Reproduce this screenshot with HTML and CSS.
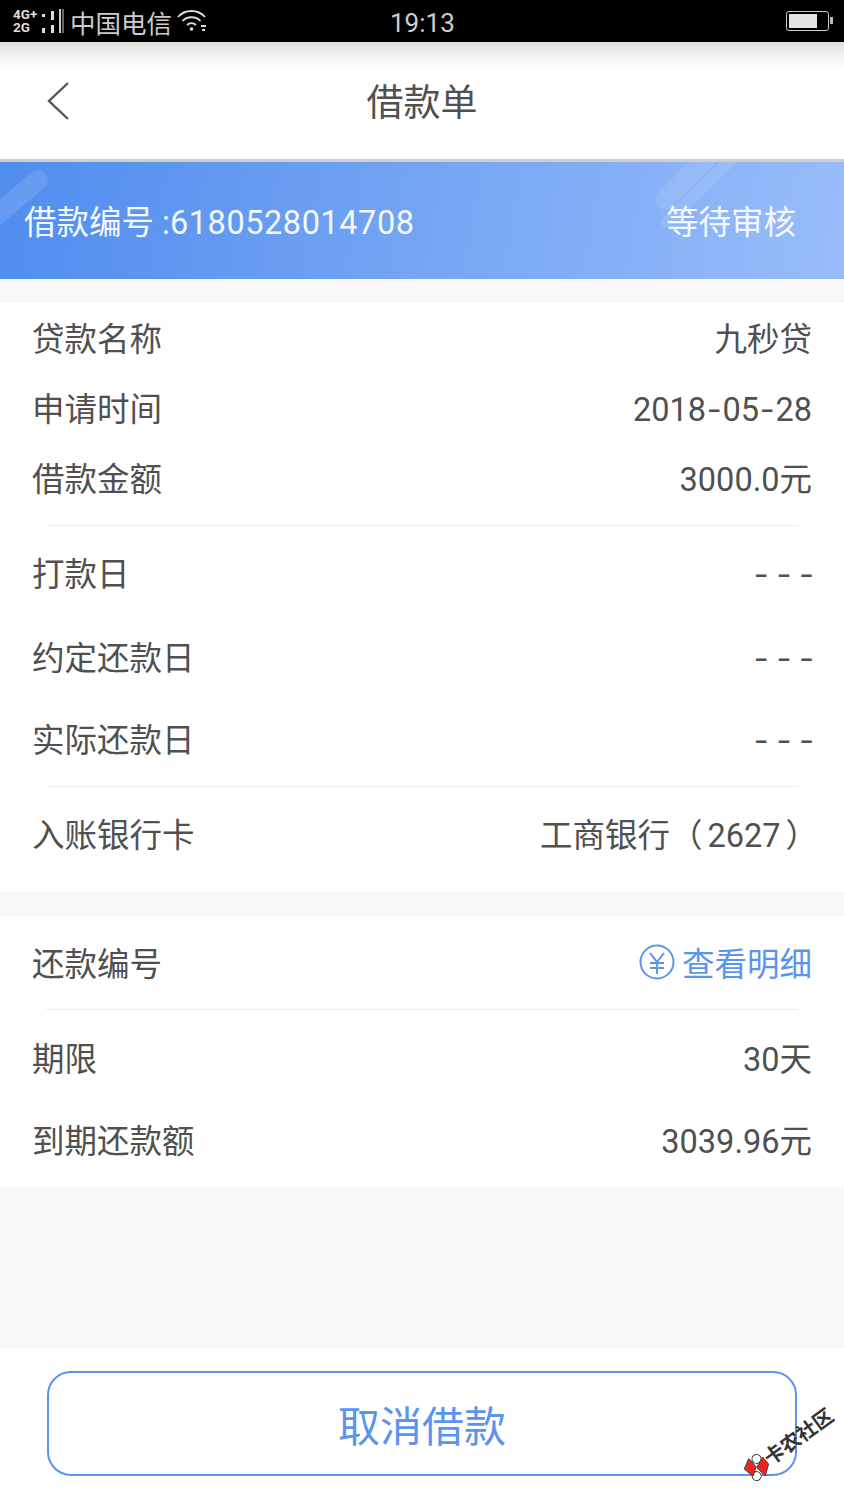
FILE: index.html
```html
<!DOCTYPE html>
<html lang="zh-CN">
<head>
    <meta charset="UTF-8">
    <meta name="viewport" content="width=device-width, initial-scale=1.0">
    <title>借款单</title>
    <link rel="stylesheet" href="styles.css">
</head>
<body>
    <div class="status">
        <div class="status-left">
            <div class="net"><span>4G+</span><span>2G</span></div>
            <svg class="signal" width="26" height="26" viewBox="0 0 26 26">
                <rect x="3" y="6" width="3" height="3" fill="#ddd"/>
                <rect x="3" y="20" width="3" height="5" fill="#ddd"/>
                <rect x="12" y="3" width="3" height="9" fill="#ddd"/>
                <rect x="12" y="17" width="3" height="8" fill="#ddd"/>
                <rect x="20" y="1" width="2" height="24" fill="#ccc"/>
                <rect x="23" y="1" width="2" height="24" fill="#666"/>
            </svg>
            <span class="carrier">中国电信</span>
            <svg class="wifi" width="30" height="26" viewBox="0 0 30 26" fill="none" stroke="#ddd" stroke-width="1.8">
                <path d="M1 9 C8 1 21 1 28 9"/>
                <path d="M5.500 13 C10 8 19 8 23.500 13"/>
                <path d="M10 17 C12.500 14.500 16.500 14.500 19 17"/>
                <circle cx="14.500" cy="21" r="1.800" fill="#ddd" stroke="none"/>
                <path d="M24 18 H29 M25 22 H28"/>
            </svg>
        </div>
        <span class="clock">19:13</span>
        <div class="battery"><div class="battery-fill"></div></div>
    </div>

    <div class="nav">
        <svg class="back" width="24" height="40" viewBox="0 0 24 40" fill="none" stroke="#555" stroke-width="2.400">
            <path d="M22 2 L3 20 L22 38"/>
        </svg>
        <span class="nav-title">借款单</span>
    </div>

    <div class="banner">
        <svg class="banner-art" width="844" height="117" viewBox="0 0 844 117" fill="none" stroke-linecap="round">
            <path d="M-14 62 L38 18" stroke="#fff" stroke-opacity="0.12" stroke-width="20"/>
            <path d="M667 60 L735 -6" stroke="#fff" stroke-opacity="0.1" stroke-width="12"/>
            <path d="M665 38 L705 -2" stroke="#fff" stroke-opacity="0.1" stroke-width="20"/>
        </svg>
        <span class="banner-no">借款编号 :<span class="banner-digits">6180528014708</span></span>
        <span class="banner-state">等待审核</span>
    </div>

    <div class="card card-loan">
        <div class="row row-tight"><span>贷款名称</span><span>九秒贷</span></div>
        <div class="row row-tight"><span>申请时间</span><span>2018<span class="hy">-</span>05<span class="hy">-</span>28</span></div>
        <div class="row row-tight"><span>借款金额</span><span>3000.0元</span></div>
        <div class="divider divider-after-tight"></div>
        <div class="row row-wide row-first"><span>打款日</span><span class="dash">- - -</span></div>
        <div class="row row-wide row-second"><span>约定还款日</span><span class="dash">- - -</span></div>
        <div class="row row-wide"><span>实际还款日</span><span class="dash">- - -</span></div>
        <div class="divider divider-after-wide"></div>
        <div class="row row-bank"><span>入账银行卡</span><span class="bank">工商银行（<span class="bank-no">2627</span>）</span></div>
    </div>

    <div class="card card-repay">
        <div class="row row-repay">
            <span>还款编号</span>
            <span class="detail">
                <svg class="detail-icon" width="36" height="36" viewBox="0 0 36 36" fill="none" stroke="#5b94ee" stroke-width="2">
                    <circle cx="18" cy="18" r="16.500"/>
                    <path d="M11 9 L18 18 L25 9 M11 19 H25 M11 24 H25 M18 18 V30"/>
                </svg>
                <span>查看明细</span>
            </span>
        </div>
        <div class="divider"></div>
        <div class="row row-wide row-term"><span>期限</span><span>30天</span></div>
        <div class="row row-wide"><span>到期还款额</span><span>3039.96元</span></div>
    </div>

    <div class="spacer"></div>

    <div class="footer">
        <button class="cancel" type="button">取消借款</button>
    </div>

    <div class="watermark">
        <svg width="24" height="24" viewBox="0 0 24 24">
            <circle cx="17" cy="5" r="4.500" fill="#fff" stroke="#333"/>
            <circle cx="7" cy="19" r="4.500" fill="#fff" stroke="#333"/>
            <path d="M1 6 L11 0 L12 11 L4 17 Z" fill="#e8281e" stroke="#333" stroke-width="0.800"/>
            <path d="M12 12 L23 7 L24 16 L14 24 Z" fill="#e8281e" stroke="#333" stroke-width="0.800"/>
        </svg>
        <span>卡农社区</span>
    </div>
</body>
</html>
```

FILE: styles.css
```css
* {
    box-sizing: border-box;
}
body {
    margin: 0;
    width: 844px;
    height: 1500px;
    overflow: hidden;
    position: relative;
    background-color: #f8f8f8;
    font-family: Roboto, "Noto Sans CJK SC", sans-serif;
    color: #505050;
}
.status {
    height: 42px;
    background: #000;
    color: #ddd;
    display: flex;
    align-items: center;
    justify-content: space-between;
    padding: 0 15px 0 13px;
    position: relative;
}
.status-left {
    display: flex;
    align-items: center;
}
.net {
    display: flex;
    flex-direction: column;
    font-size: 13.500px;
    line-height: 13px;
    font-weight: 700;
    width: 26px;
}
.signal {
    margin-right: 5px;
}
.carrier {
    font-size: 25.500px;
    margin-right: 5px;
    color: #ccc;
}
.clock {
    position: absolute;
    left: 390px;
    top: 6px;
    font-size: 26px;
    line-height: 34px;
    color: #ccc;
}
.battery {
    width: 43px;
    height: 20px;
    border: 1px solid #ccc;
    border-radius: 3px;
    padding: 2px;
    position: relative;
}
.battery::after {
    content: "";
    position: absolute;
    right: -5px;
    top: 5px;
    width: 3px;
    height: 7px;
    background: #bbb;
}
.battery-fill {
    width: 28px;
    height: 14px;
    background: #e4e4e4;
}
.nav {
    height: 117px;
    background: linear-gradient(#dedede, #f6f6f6 16px, #fff 28px);
    position: relative;
    display: flex;
    align-items: center;
    justify-content: center;
    padding-bottom: 2px;
}
.back {
    position: absolute;
    left: 46px;
    top: 39px;
}
.nav-title {
    font-size: 37px;
}
.banner {
    height: 120px;
    border-top: 3px solid #cfcfcf;
    background: linear-gradient(100deg, #4f8dee, #99bdf9);
    color: #fff;
    display: flex;
    align-items: center;
    justify-content: space-between;
    padding: 0 48px 2px 24px;
    position: relative;
    overflow: hidden;
}
.banner-art {
    position: absolute;
    left: 0;
    top: 0;
}
.banner-no,
.banner-state {
    position: relative;
    font-size: 32.500px;
    color: #f4f8ff;
}
.banner-digits {
    letter-spacing: 0.550px;
}
.card {
    background: #fff;
    margin-top: 24px;
    font-size: 32.500px;
    line-height: 40px;
}
.card-loan {
    height: 589px;
}
.card-repay {
    height: 271px;
}
.row {
    display: flex;
    justify-content: space-between;
    align-items: center;
    padding: 2px 32px 0;
}
.row-tight {
    height: 70px;
    padding-top: 4px;
}
.row-wide {
    height: 82px;
}
.row-first {
    margin-top: 7px;
}
.row-second {
    margin-top: 2px;
}
.row-term {
    margin-top: 8px;
}
.row-bank {
    height: 96px;
}
.row-repay {
    height: 93px;
    padding-top: 5px;
}
.divider {
    height: 1px;
    margin: 0 46px;
    background: #ebebeb;
}
.divider-after-tight {
    margin-top: 12px;
}
.divider-after-wide {
    margin-top: 5px;
}
.hy {
    font-family: Inter, sans-serif;
    margin: 0 0.750px;
}
.dash {
    font-family: Inter, sans-serif;
    word-spacing: -1.500px;
    margin-right: -2px;
}
.bank {
    margin-right: -6px;
}
.bank-no {
    margin: 0 5px;
}
.detail {
    display: flex;
    align-items: center;
    gap: 7px;
    color: #5b94ee;
}
.detail-icon {
    margin-bottom: 7px;
}
.spacer {
    height: 161px;
}
.footer {
    height: 152px;
    background: #fff;
    padding: 23px 47px 24px;
}
.cancel {
    width: 100%;
    height: 105px;
    background: #fff;
    border: 2.500px solid #5b94ee;
    border-radius: 24px;
    color: #5b94ee;
    font-family: inherit;
    font-size: 42px;
}
.watermark {
    position: absolute;
    left: 737px;
    top: 1432px;
    height: 24px;
    display: flex;
    align-items: center;
    transform: rotate(-36deg);
    font-size: 20px;
    line-height: 24px;
    font-weight: 700;
    color: #333;
    white-space: nowrap;
}
```
